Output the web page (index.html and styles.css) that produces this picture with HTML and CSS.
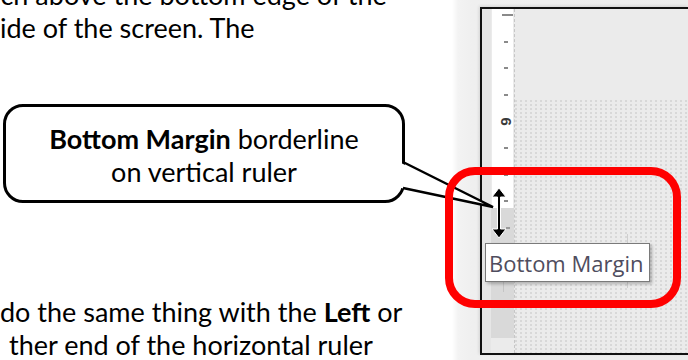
FILE: index.html
```html
<!DOCTYPE html>
<html>
<head>
<meta charset="utf-8">
<link rel="stylesheet" href="styles.css">
</head>
<body>
<div class="text-col">
  <div class="para top">
    <div class="line shift">ich above the bottom edge of the</div>
    <div class="line">ide of the screen. The</div>
  </div>
  <div class="callout">
    <div class="line"><b>Bottom Margin</b> borderline</div>
    <div class="line">on vertical ruler</div>
  </div>
  <div class="para bottom">
    <div class="line">do the same thing with the <b>Left</b> or</div>
    <div class="line indent">ther end of the horizontal ruler</div>
  </div>
</div>
<div class="screen">
  <div class="page">
    <div class="gutter"></div>
    <div class="ruler">
      <div class="ruler-white">
        <div class="tick long"></div>
        <div class="tick"></div>
        <div class="tick"></div>
        <div class="tick"></div>
        <div class="num"><span>9</span></div>
        <div class="tick"></div>
        <div class="tick"></div>
        <div class="tick"></div>
      </div>
      <div class="ruler-grey">
        <div class="tick"></div>
      </div>
    </div>
    <div class="sep"></div>
    <div class="doc">
      <div class="doc-plain"></div>
      <div class="doc-dots"></div>
    </div>
  </div>
</div>
<svg class="overlay" width="688" height="360" viewBox="0 0 688 360">
  <line x1="627.5" y1="234" x2="627.5" y2="288" stroke="#cfcfcf" stroke-width="1"/>
  <line x1="503.5" y1="280" x2="503.5" y2="292" stroke="#c4c4c4" stroke-width="1"/>
  <polygon points="401,163 493,207 401,188" fill="#fff"/>
  <polyline points="403,162 493,207 403,188" fill="none" stroke="#000" stroke-width="2.5" stroke-linejoin="miter"/>
  <rect x="449" y="171" width="228" height="133" rx="26" ry="26" fill="none" stroke="#ff0000" stroke-width="8"/>
  <path d="M499 188 L506 197 L500.5 197 L500.5 229 L506 229 L499 238 L492 229 L497.5 229 L497.5 197 L492 197 Z" fill="#000" stroke="#fff" stroke-width="1"/>
</svg>
<div class="tooltip">Bottom Margin</div>
</body>
</html>
```
FILE: styles.css
```css
html, body {
  margin: 0;
  padding: 0;
}
body {
  width: 688px;
  height: 360px;
  overflow: hidden;
  position: relative;
  display: flex;
  background: #fff;
}
.text-col {
  width: 452px;
  flex: none;
  font-family: Lato, "Liberation Sans", sans-serif;
  font-size: 27px;
  line-height: 33px;
  color: #000;
}
.line {
  white-space: nowrap;
}
.shift {
  margin-left: -6px;
}
.indent {
  padding-left: 9px;
}
.top {
  margin-top: -22px;
}
.callout {
  margin: 60px 0 0 3px;
  width: 402px;
  box-sizing: border-box;
  border: 3px solid #000;
  border-radius: 20px;
  padding: 15px 0 12px;
  text-align: center;
  background: #fff;
}
.bottom {
  margin-top: 92px;
}
.screen {
  flex: 1;
  padding: 7px 0 0 28px;
  background: linear-gradient(to right, #fff 0, #f3f3f3 6px, #efefef 20px, #ececec 100%);
}
.page {
  height: 348px;
  box-sizing: border-box;
  border: 2px solid #111;
  border-right: 0;
  display: flex;
  background: #ebebeb;
  box-shadow: -1px -1px 3px rgba(0, 0, 0, 0.12);
}
.gutter {
  width: 9px;
  background: #e6e6e6;
}
.ruler {
  width: 23px;
  display: flex;
  flex-direction: column;
}
.ruler-white {
  height: 199px;
  margin: 0 1px;
  background: #fff;
  display: flex;
  flex-direction: column;
}
.ruler-grey {
  height: 130px;
  background: #d9d9d9;
  display: flex;
  flex-direction: column;
}
.tick {
  width: 4px;
  height: 2px;
  margin: 24.6px 0 0 12px;
  background: #8a8a8a;
}
.ruler-grey .tick {
  margin: 19px 0 0 15px;
  background: #9a9a9a;
}
.tick.long {
  width: 11px;
  margin: 5px 0 0 10px;
}
.num + .tick {
  margin-top: 19.6px;
}
.num {
  height: 12px;
  margin-top: 19.6px;
  display: flex;
  align-items: center;
  justify-content: center;
  padding-left: 5px;
}
.num span {
  display: block;
  transform: rotate(-90deg);
  font-family: "Liberation Sans", sans-serif;
  font-weight: bold;
  font-size: 15px;
  line-height: 1;
  color: #3a3a3a;
}
.sep {
  width: 0;
  border-left: 1px dashed #c6c6c6;
}
.doc {
  flex: 1;
  display: flex;
  flex-direction: column;
}
.doc-plain {
  height: 91px;
}
.doc-dots {
  flex: 1;
  background-image: radial-gradient(circle at 1px 1px, #d8d8d8 0.9px, rgba(0, 0, 0, 0) 1.3px);
  background-size: 5px 4px;
}
.overlay {
  position: absolute;
  left: 0;
  top: 0;
  pointer-events: none;
}
.tooltip {
  position: absolute;
  left: 485px;
  top: 243px;
  padding: 4px 6px 3px 3px;
  border: 1px solid #7a7a7a;
  background: #fff;
  box-shadow: 2px 2px 3px rgba(0, 0, 0, 0.25);
  font-family: "Open Sans", "Noto Sans", sans-serif;
  font-size: 22px;
  line-height: 30px;
  color: #4f4d5e;
  white-space: nowrap;
}
```
